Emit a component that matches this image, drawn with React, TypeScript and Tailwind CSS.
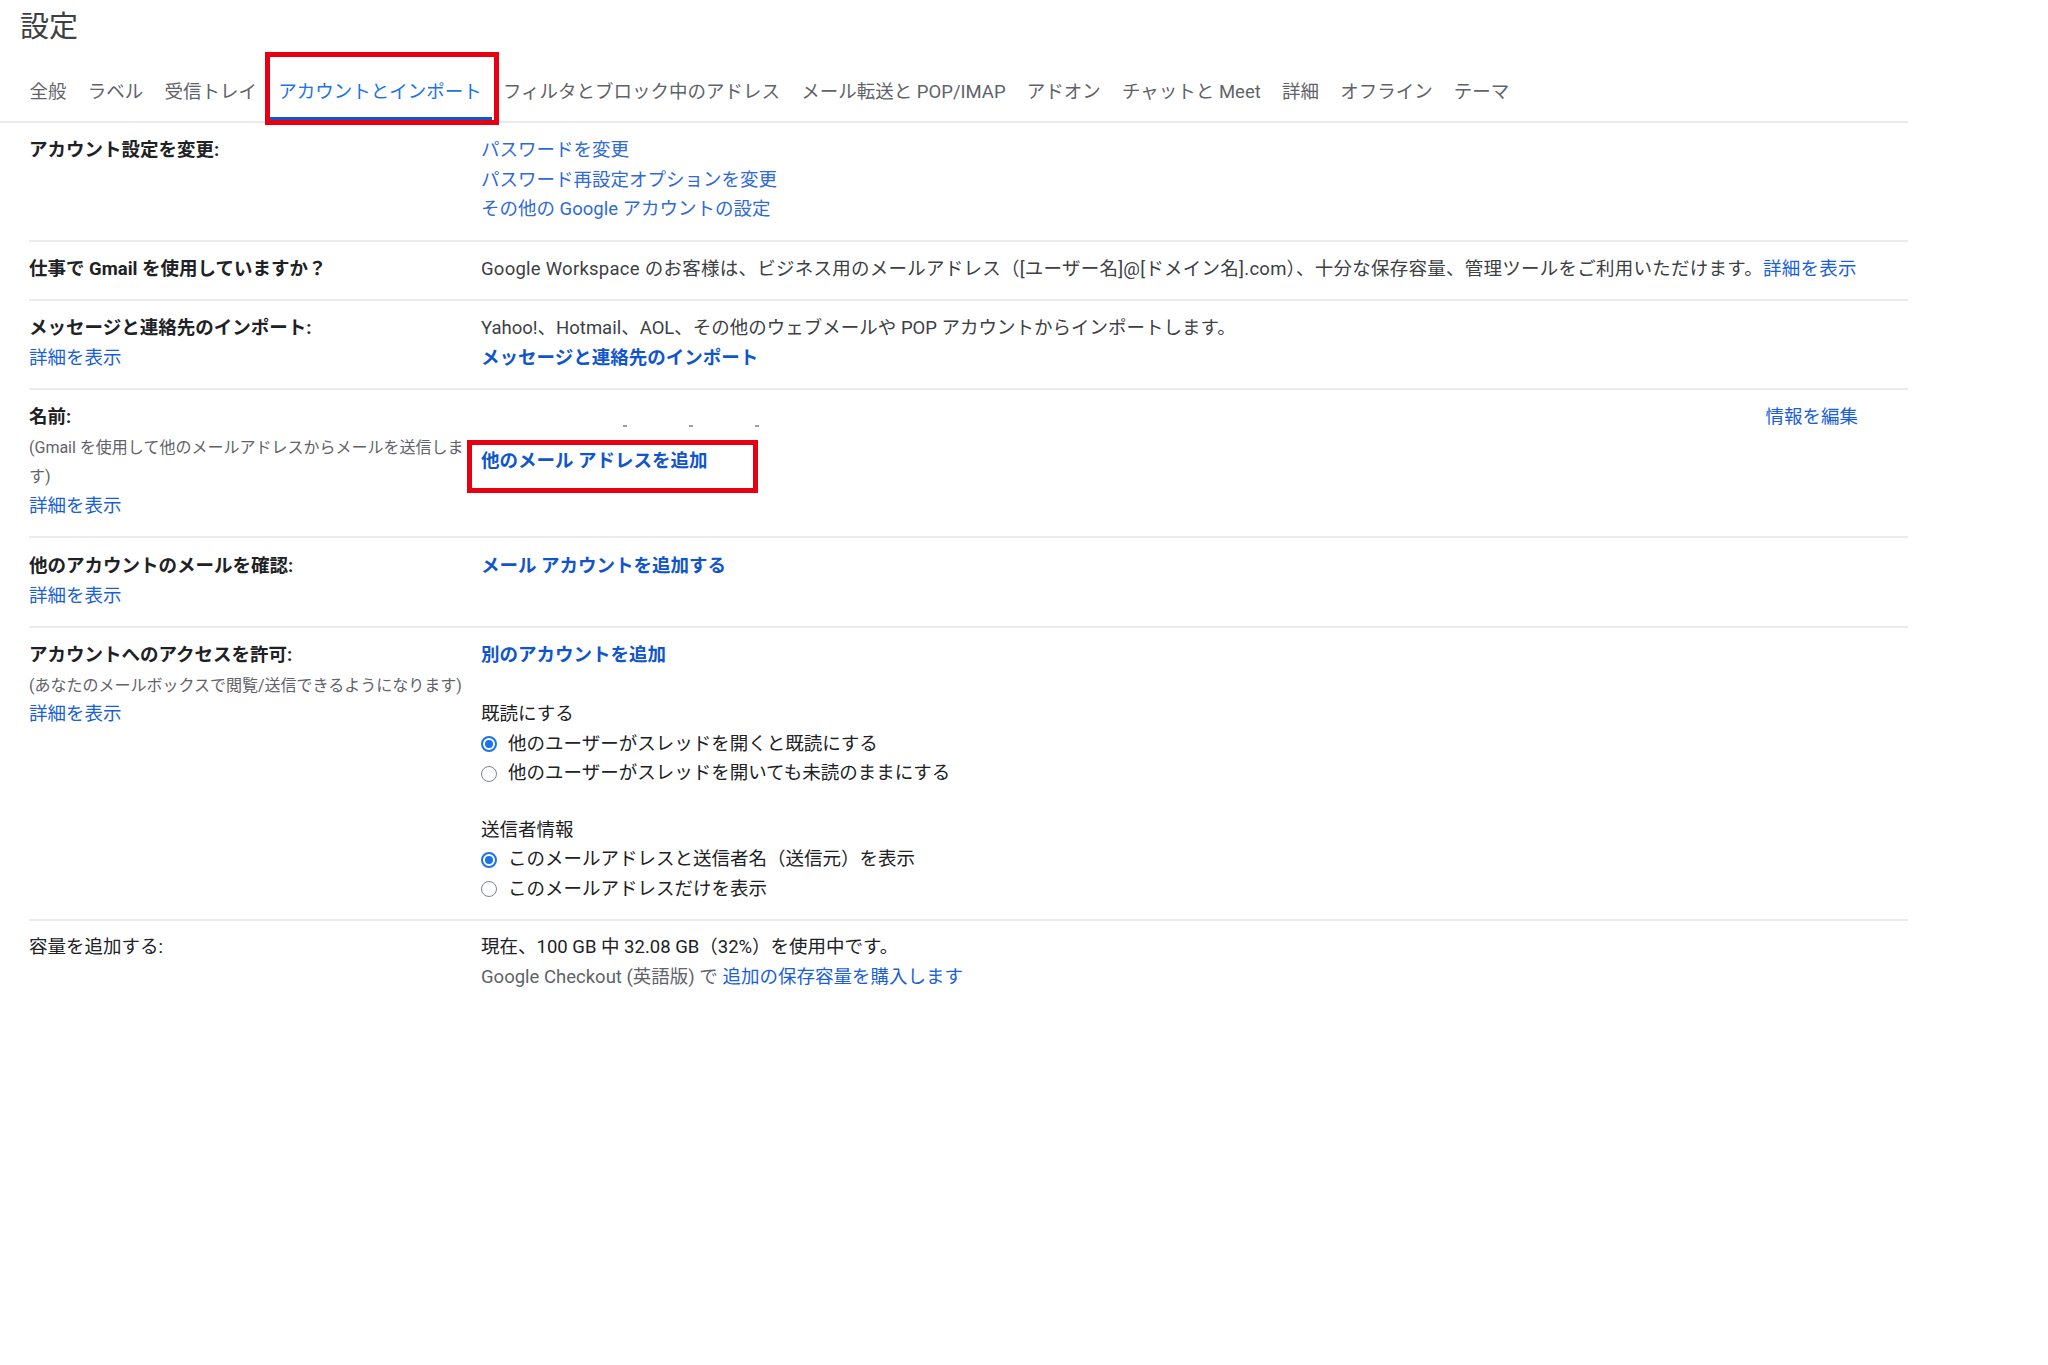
import type { ReactNode } from "react";

const TABS = [
  "全般",
  "ラベル",
  "受信トレイ",
  "アカウントとインポート",
  "フィルタとブロック中のアドレス",
  "メール転送と POP/IMAP",
  "アドオン",
  "チャットと Meet",
  "詳細",
  "オフライン",
  "テーマ",
];

function Row({ label, children, last, pt = "pt-[13px]" }: { label: ReactNode; children: ReactNode; last?: boolean; pt?: string }) {
  return (
    <div className={`flex ${pt} pb-[15px] leading-[29.5px] ${last ? "" : "border-b-2 border-[#ebebeb]"}`}>
      <div className="w-[452px] shrink-0 pr-[12px]">{label}</div>
      <div className="flex-1 pr-[50px]">{children}</div>
    </div>
  );
}

function Label({ children }: { children: ReactNode }) {
  return <div className="font-bold text-[#202124]">{children}</div>;
}

function Note({ children }: { children: ReactNode }) {
  return <div className="text-[16px] text-[#5f6368] leading-[29.5px]">{children}</div>;
}

function More() {
  return <div className="text-[#1a5fd6]">詳細を表示</div>;
}

function Radio({ checked, children }: { checked?: boolean; children: ReactNode }) {
  return (
    <div className="flex items-center gap-[11px]">
      {checked ? (
        <span className="w-[16px] h-[16px] rounded-full border-2 border-[#1a73e8] flex items-center justify-center">
          <span className="w-[8px] h-[8px] rounded-full bg-[#1a73e8]" />
        </span>
      ) : (
        <span className="w-[16px] h-[16px] rounded-full border-[1.5px] border-[#80868b]" />
      )}
      <span className="text-[#202124]">{children}</span>
    </div>
  );
}

export default function App() {
  return (
    <div className="w-[2048px] h-[1365px] bg-white text-[18.5px] text-[#202124] font-[Roboto,'Noto_Sans_CJK_JP',sans-serif]">
      <h1 className="pl-[20px] pt-[6px] h-[48px] text-[29px] leading-[42px] font-normal text-[#3c4043]">設定</h1>

      <div className="w-[1908px] flex pl-[19px] pt-[4px] border-b-2 border-[#ebebeb]">
        {TABS.map((t, i) => {
          const active = i === 3;
          return (
            <div
              key={t}
              className={`relative px-[10.6px] pt-[28px] pb-[13px] leading-[24px] whitespace-nowrap border-b-4 ${
                active ? "border-[#0b57d0] text-[#1a73e8]" : "border-transparent text-[#5f6368]"
              }`}
            >
              {t}
              {active && (
                <span className="absolute -left-[3px] -right-[7px] top-0 -bottom-[8px] border-[5px] border-[#e60012]" />
              )}
            </div>
          );
        })}
      </div>

      <div className="ml-[29px] w-[1879px]">
        <Row label={<Label>アカウント設定を変更:</Label>}>
          <div className="text-[#2f6ad8]">パスワードを変更</div>
          <div className="text-[#2f6ad8]">パスワード再設定オプションを変更</div>
          <div className="text-[#2f6ad8]">その他の Google アカウントの設定</div>
        </Row>

        <Row label={<Label>仕事で Gmail を使用していますか？</Label>}>
          <div className="whitespace-nowrap tracking-[0.25px] text-[#3c4043]">
            Google Workspace のお客様は、ビジネス用のメールアドレス（[ユーザー名]@[ドメイン名].com）、十分な保存容量、管理ツールをご利用いただけます。
            <span className="text-[#1a5fd6]">詳細を表示</span>
          </div>
        </Row>

        <Row
          label={
            <>
              <Label>メッセージと連絡先のインポート:</Label>
              <More />
            </>
          }
        >
          <div className="text-[#3c4043]">Yahoo!、Hotmail、AOL、その他のウェブメールや POP アカウントからインポートします。</div>
          <div className="font-bold text-[#1155cc]">メッセージと連絡先のインポート</div>
        </Row>

        <Row
          label={
            <>
              <Label>名前:</Label>
              <Note>(Gmail を使用して他のメールアドレスからメールを送信します)</Note>
              <More />
            </>
          }
        >
          <div className="flex justify-between">
            <div>
              <div className="h-[29.5px] flex items-end pb-[6px] pl-[142px] gap-[62px]">
                <span className="w-[4px] h-[2px] bg-[#9aa0a6]" />
                <span className="w-[4px] h-[2px] bg-[#9aa0a6]" />
                <span className="w-[4px] h-[2px] bg-[#9aa0a6]" />
              </div>
              <div className="mt-[7px] -ml-[14px] w-[291px] border-[5px] border-[#e60012] pl-[9px] pt-[2px] pb-[12px]">
                <span className="font-bold text-[#1155cc]">他のメール アドレスを追加</span>
              </div>
            </div>
            <div className="text-[#1a5fd6]">情報を編集</div>
          </div>
        </Row>

        <Row
          pt="pt-[14px]"
          label={
            <>
              <Label>他のアカウントのメールを確認:</Label>
              <More />
            </>
          }
        >
          <div className="font-bold text-[#1155cc]">メール アカウントを追加する</div>
        </Row>

        <Row
          label={
            <>
              <Label>アカウントへのアクセスを許可:</Label>
              <Note>(あなたのメールボックスで閲覧/送信できるようになります)</Note>
              <More />
            </>
          }
        >
          <div className="font-bold text-[#1155cc]">別のアカウントを追加</div>
          <div className="mt-[29.5px]">既読にする</div>
          <Radio checked>他のユーザーがスレッドを開くと既読にする</Radio>
          <Radio>他のユーザーがスレッドを開いても未読のままにする</Radio>
          <div className="mt-[27px]">送信者情報</div>
          <Radio checked>このメールアドレスと送信者名（送信元）を表示</Radio>
          <Radio>このメールアドレスだけを表示</Radio>
        </Row>

        <Row last pt="pt-[12px]" label={<div className="text-[#202124]">容量を追加する:</div>}>
          <div>現在、100 GB 中 32.08 GB（32%）を使用中です。</div>
          <div className="text-[#5f6368]">
            Google Checkout (英語版) で <span className="text-[#1a5fd6]">追加の保存容量を購入します</span>
          </div>
        </Row>
      </div>
    </div>
  );
}
